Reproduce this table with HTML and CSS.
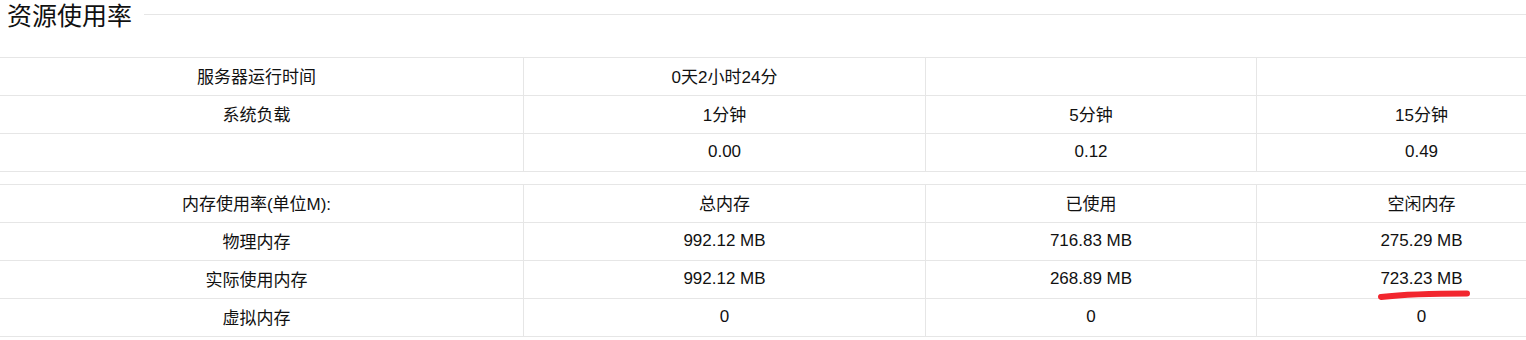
FILE: index.html
```html
<!DOCTYPE html>
<html lang="zh-CN">
<head>
<meta charset="utf-8">
<title>资源使用率</title>
<link rel="stylesheet" href="styles.css">
</head>
<body>
<div class="page">
  <div class="section-title">
    <h2>资源使用率</h2>
    <span class="rule"></span>
  </div>

  <table class="stats">
    <colgroup>
      <col class="c1"><col class="c2"><col class="c3"><col class="c4">
    </colgroup>
    <tbody>
      <tr><td>服务器运行时间</td><td>0天2小时24分</td><td></td><td></td></tr>
      <tr><td>系统负载</td><td>1分钟</td><td>5分钟</td><td>15分钟</td></tr>
      <tr><td></td><td>0.00</td><td>0.12</td><td>0.49</td></tr>
    </tbody>
  </table>

  <table class="stats second">
    <colgroup>
      <col class="c1"><col class="c2"><col class="c3"><col class="c4">
    </colgroup>
    <tbody>
      <tr><td>内存使用率(单位M):</td><td>总内存</td><td>已使用</td><td>空闲内存</td></tr>
      <tr><td>物理内存</td><td>992.12 MB</td><td>716.83 MB</td><td>275.29 MB</td></tr>
      <tr><td>实际使用内存</td><td>992.12 MB</td><td>268.89 MB</td><td class="marked">723.23 MB<svg class="scribble" width="330" height="40" aria-hidden="true"><path d="M124 36 Q155 32.5 210 32.5" fill="none" stroke="#f2262e" stroke-width="6" stroke-linecap="round"/></svg></td></tr>
      <tr><td>虚拟内存</td><td>0</td><td>0</td><td>0</td></tr>
    </tbody>
  </table>
</div>
</body>
</html>
```

FILE: styles.css
```css
html, body {
  margin: 0;
  padding: 0;
  background: #fff;
  overflow: hidden;
}

.page {
  width: 1526px;
  overflow: hidden;
  font-family: "Liberation Sans", "Noto Sans CJK SC", sans-serif;
  color: #111;
}

.section-title {
  display: flex;
  align-items: center;
  height: 28px;
  padding-left: 7px;
}

.section-title h2 {
  margin: 0;
  font-size: 25px;
  font-weight: normal;
  line-height: 28px;
  padding-top: 3px;
  color: #111;
}

.section-title .rule {
  flex: 1;
  height: 1px;
  background: #e6e6e6;
  margin-left: 12px;
}

.stats {
  border-collapse: separate;
  border-spacing: 0;
  table-layout: fixed;
  width: 1596px;
  margin: 29px 0 0 -10px;
  border-top: 1px solid #e6e6e6;
  font-size: 17px;
}

.stats.second {
  margin-top: 12px;
}

.stats .c1 { width: 533px; }
.stats .c2 { width: 402px; }
.stats .c3 { width: 331px; }
.stats .c4 { width: 330px; }

.stats td {
  height: 35px;
  padding: 0 0 2px;
  text-align: center;
  vertical-align: middle;
  border-bottom: 1px solid #e6e6e6;
  white-space: nowrap;
}

.stats td + td {
  border-left: 1px solid #e6e6e6;
}

.stats td.marked {
  position: relative;
}

.scribble {
  position: absolute;
  left: 0;
  top: 0;
  overflow: visible;
  pointer-events: none;
}
```
